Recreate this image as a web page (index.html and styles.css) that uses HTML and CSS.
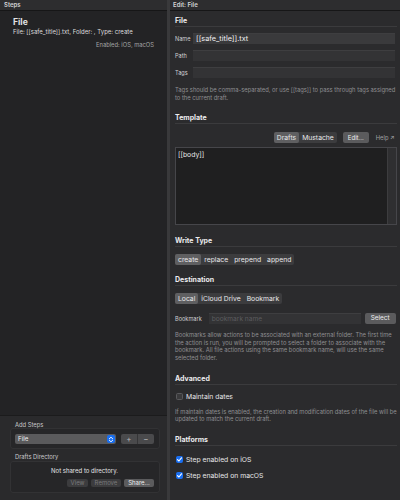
FILE: index.html
```html
<!DOCTYPE HTML>
<html>
    <head>
        <meta http-equiv="Content-Type" content="text/html; charset=UTF-8"/>
        <title>Edit: File</title>
        <link rel="stylesheet" href="styles.css">
    </head>
    <body>
        <div class="window">
            <aside class="steps">
                <div class="pane-title">Steps</div>
                <div class="step">
                    <div class="step-name">File</div>
                    <div class="step-desc">File: [[safe_title]].txt, Folder: , Type: create</div>
                    <div class="step-enabled">Enabled: iOS, macOS</div>
                </div>
                <div class="steps-foot">
                    <div class="group-label">Add Steps</div>
                    <div class="group-box add-row">
                        <div class="popup">
                            <span>File</span>
                            <span class="popup-arrows">
                                <svg width="6" height="7" viewBox="0 0 6 7"><path d="M1.3 2.8 3 1.2 4.7 2.8M1.3 4.2 3 5.8 4.7 4.2" fill="none" stroke="#fff" stroke-width="0.9" stroke-linecap="round" stroke-linejoin="round"/></svg>
                            </span>
                        </div>
                        <div class="stepper"><span>+</span><span>&minus;</span></div>
                    </div>
                    <div class="group-label">Drafts Directory</div>
                    <div class="group-box dir">
                        <p>Not shared to directory.</p>
                        <div class="dir-buttons">
                            <span class="btn off">View</span>
                            <span class="btn off">Remove</span>
                            <span class="btn">Share...</span>
                        </div>
                    </div>
                </div>
            </aside>

            <main class="editor">
                <div class="pane-title">Edit: File</div>
                <div class="form">
                    <h2>File</h2>
                    <div class="row">
                        <label>Name</label>
                        <div class="field lit">[[safe_title]].txt</div>
                    </div>
                    <div class="row">
                        <label>Path</label>
                        <div class="field"></div>
                    </div>
                    <div class="row">
                        <label>Tags</label>
                        <div class="field"></div>
                    </div>
                    <p class="help">Tags should be comma-separated, or use [[tags]] to pass through tags assigned<br>to the current draft.</p>

                    <h2>Template</h2>
                    <div class="toolbar">
                        <div class="seg">
                            <span class="on">Drafts</span><span>Mustache</span>
                        </div>
                        <span class="btn">Edit...</span>
                        <span class="help-link">Help &#8599;</span>
                    </div>
                    <div class="template">
                        <div class="template-text">[[body]]</div>
                        <div class="gutter"></div>
                    </div>

                    <h2>Write Type</h2>
                    <div class="seg">
                        <span class="on">create</span><span>replace</span><span>prepend</span><span>append</span>
                    </div>

                    <h2>Destination</h2>
                    <div class="seg">
                        <span class="on">Local</span><span>iCloud Drive</span><span>Bookmark</span>
                    </div>
                    <div class="row bookmark">
                        <label>Bookmark</label>
                        <div class="field placeholder">bookmark name</div>
                        <span class="btn">Select</span>
                    </div>
                    <p class="help">Bookmarks allow actions to be associated with an external folder. The first time<br>the action is run, you will be prompted to select a folder to associate with the<br>bookmark. All file actions using the same bookmark name, will use the same<br>selected folder.</p>

                    <h2>Advanced</h2>
                    <div class="check"><span class="box"></span>Maintain dates</div>
                    <p class="help">If maintain dates is enabled, the creation and modification dates of the file will be<br>updated to match the current draft.</p>

                    <h2 class="platforms">Platforms</h2>
                    <div class="check"><span class="box ticked"><svg width="7" height="7" viewBox="0 0 7 7"><path d="M1.5 3.6 2.9 5 5.5 1.8" fill="none" stroke="#fff" stroke-width="1.1" stroke-linecap="round" stroke-linejoin="round"/></svg></span>Step enabled on iOS</div>
                    <div class="check"><span class="box ticked"><svg width="7" height="7" viewBox="0 0 7 7"><path d="M1.5 3.6 2.9 5 5.5 1.8" fill="none" stroke="#fff" stroke-width="1.1" stroke-linecap="round" stroke-linejoin="round"/></svg></span>Step enabled on macOS</div>
                </div>
            </main>
        </div>
    </body>
</html>
```

FILE: styles.css
```css
html, body{
    margin:0;
    background:#2b2b2d;
}
body{
    font-family:Inter, "Noto Sans", sans-serif;
    font-size:6px;
    line-height:8px;
    color:#e2e2e4;
}
.window{
    display:flex;
    width:400px;
    height:500px;
    overflow:hidden;
}

/* shared title strip over both panes */
.pane-title{
    height:10px;
    line-height:10px;
    padding-left:4px;
    font-size:6px;
    font-weight:600;
    color:#d4d4d6;
    background:#2d2d2f;
    border-bottom:1px solid #161617;
}

/* left pane: list of steps */
.steps{
    width:167px;
    flex:none;
    display:flex;
    flex-direction:column;
    background:#232325;
    border-right:3px solid #39393b;
}
.step{
    padding:6px 13px 0 13px;
}
.step-name{
    font-size:8.6px;
    font-weight:700;
    line-height:11px;
}
.step-desc{
    font-size:6px;
    line-height:8px;
    color:#dcdcde;
}
.step-enabled{
    margin-top:5px;
    text-align:right;
    font-size:5.8px;
    line-height:8px;
    color:#a4a4a6;
}
.steps-foot{
    margin-top:auto;
    height:85px;
    box-sizing:border-box;
    padding:5px 7px 0 10px;
    background:#2a2a2c;
    border-top:1px solid #1b1b1c;
}
.group-label{
    font-size:5.8px;
    line-height:7px;
    padding-left:5px;
    color:#c8c8ca;
}
.group-box{
    background:#262628;
    border:1px solid #323234;
    border-radius:3px;
}
.add-row{
    display:flex;
    gap:5px;
    padding:5px 5px 4px 4px;
    margin-bottom:4px;
}
.popup{
    flex:1;
    height:10px;
    display:flex;
    align-items:center;
    justify-content:space-between;
    padding-left:3px;
    background:#5a5a5c;
    border-radius:2px;
    font-size:6.2px;
    color:#ececee;
}
.popup-arrows{
    width:8px;
    height:8px;
    margin-right:1px;
    display:flex;
    align-items:center;
    justify-content:center;
    background:#1a6ff0;
    border-radius:2px;
}
.stepper{
    width:33px;
    height:10px;
    display:flex;
    background:#4a4a4c;
    border-radius:2px;
}
.stepper span{
    flex:1;
    text-align:center;
    line-height:10px;
    font-size:8px;
    color:#b8b8ba;
}
.stepper span + span{
    border-left:1px solid #353537;
}
.dir{
    margin-top:1px;
    padding:5px 5px 5px 4px;
}
.dir p{
    margin:0;
    text-align:center;
    font-size:6px;
    line-height:8px;
    color:#e4e4e6;
}
.dir-buttons{
    display:flex;
    justify-content:flex-end;
    gap:3px;
    margin-top:4px;
}
.dir-buttons .btn{
    height:8px;
    line-height:8px;
}
.dir-buttons .btn:nth-child(1){ width:21px; }
.dir-buttons .btn:nth-child(2){ width:30px; }
.dir-buttons .btn:nth-child(3){ width:30px; }

/* buttons */
.btn{
    display:inline-block;
    text-align:center;
    font-size:6px;
    line-height:11px;
    height:11px;
    padding:0 3px;
    box-sizing:border-box;
    background:#5b5b5d;
    border-radius:2px;
    color:#ececee;
}
.btn.off{
    background:#3c3c3e;
    color:#7a7a7c;
}

/* right pane: step editor */
.editor{
    flex:1;
    background:#2b2b2d;
}
.editor .pane-title{
    padding-left:3px;
}
.form{
    padding:0 5px;
}
h2{
    margin:5px 0 0 0;
    font-size:7px;
    font-weight:700;
    line-height:10px;
    border-bottom:1px solid #3b3b3d;
    color:#ececee;
}
h2 + *{
    margin-top:6px;
}
.row{
    display:flex;
    align-items:center;
    gap:1px;
    padding-right:2px;
    margin-bottom:6px;
}
.row label{
    width:17px;
    flex:none;
    font-size:5.6px;
    color:#d0d0d2;
}
.field{
    flex:1;
    height:11px;
    line-height:10px;
    padding-left:3px;
    background:#333335;
    border-top:1px solid #3e3e40;
    box-sizing:border-box;
    font-size:7.3px;
    color:#f0f0f2;
}
.field.lit{
    background:#3a3a3c;
}
.help{
    margin:8px 0 0 0;
    font-size:5.8px;
    line-height:7.6px;
    white-space:nowrap;
    color:#8f8f92;
}
.help + h2{
    margin-top:12px;
}

/* template block */
.toolbar{
    display:flex;
    justify-content:flex-end;
    align-items:center;
    gap:6px;
    padding-right:2px;
    margin-top:8px;
}
.toolbar .btn{
    width:26px;
}
.help-link{
    font-size:5.8px;
    color:#a0a0a2;
    padding-left:1px;
}
.seg{
    display:flex;
    width:max-content;
    height:11px;
    background:#3c3c3e;
    border-radius:2px;
}
.seg span{
    padding:0 3px;
    font-size:6.8px;
    line-height:11px;
    color:#e8e8ea;
    border-radius:2px;
}
.seg span.on{
    background:#5f5f61;
}
.template{
    display:flex;
    height:78px;
    margin-top:4px;
    border:1px solid #46464a;
    box-sizing:border-box;
}
.template-text{
    flex:1;
    padding:2px 2px;
    background:#1f1f20;
    font-size:6.8px;
    line-height:9px;
    color:#e8e8ea;
}
.gutter{
    width:8px;
    background:#2f2f31;
    border-left:1px solid #3d3d3f;
}
.template + h2{
    margin-top:11px;
}
.seg + h2{
    margin-top:10px;
}
h2 + .seg{
    margin-top:7px;
}

.bookmark{
    margin-top:9px;
    gap:4px;
    padding-right:1px;
}
.bookmark label{
    width:auto;
    margin-right:3px;
}
.bookmark .btn{
    width:31px;
    font-size:6.4px;
}
.field.placeholder{
    color:#5c5c5f;
    font-size:6.6px;
    background:#333335;
}
.bookmark + .help{
    margin-top:7px;
}

/* checkboxes */
.check{
    display:flex;
    align-items:center;
    height:10px;
    font-size:6.8px;
    color:#e6e6e8;
}
h2 + .check{
    margin-top:7px;
}
h2.platforms + .check{
    margin-top:9px;
}
.check + .check{
    margin-top:6px;
}
.check + .help{
    margin-top:6px;
}
.box{
    width:7px;
    height:7px;
    margin:0 3px 0 1px;
    box-sizing:border-box;
    border:1px solid #59595c;
    background:#3a3a3c;
    border-radius:1.5px;
    display:flex;
}
.box.ticked{
    background:#1a6ff0;
    border-color:#1a6ff0;
}
.box svg{
    margin:-1px;
}
```
